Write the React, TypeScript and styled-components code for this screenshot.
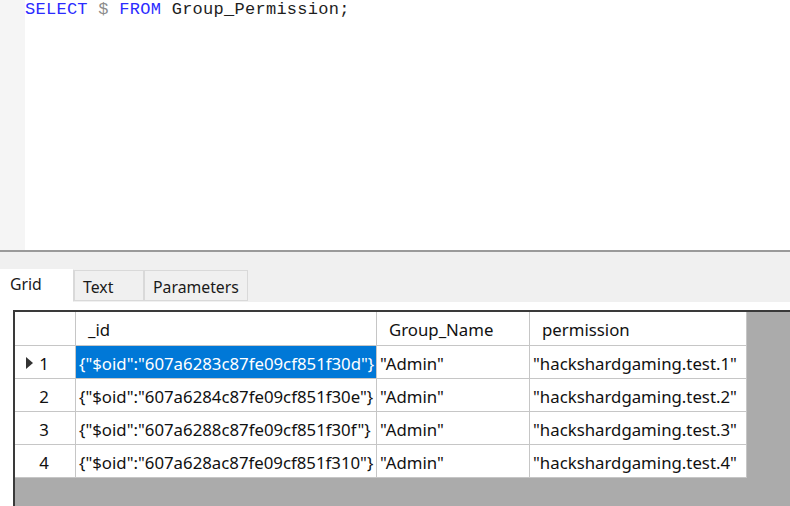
import React from "react";
import styled, { createGlobalStyle } from "styled-components";

const Global = createGlobalStyle`
  html, body { margin: 0; padding: 0; background: #ffffff; }
  body { width: 790px; height: 506px; overflow: hidden; }
  #root { width: 790px; height: 506px; }
`;

const Page = styled.div`
  width: 790px;
  height: 506px;
  display: flex;
  flex-direction: column;
  overflow: hidden;
`;

const Editor = styled.div`
  height: 250px;
  display: flex;
  background: #ffffff;
  flex: none;
`;

const Gutter = styled.div`
  width: 25px;
  background: #f5f5f5;
  flex: none;
`;

const Code = styled.div`
  flex: 1;
  font-family: "Liberation Mono", "DejaVu Sans Mono", monospace;
  font-size: 17px;
  letter-spacing: 0.27px;
  line-height: 20px;
  color: #1e1e1e;
  white-space: pre;
`;

const Kw = styled.span`
  color: #2b2bff;
`;

const Sym = styled.span`
  color: #8c8c8c;
`;

const Splitter = styled.div`
  height: 2px;
  background: #9a9a9a;
  flex: none;
`;

const TabStrip = styled.div`
  height: 50px;
  background: #f0f0f0;
  display: flex;
  align-items: flex-end;
  flex: none;
`;

const Tab = styled.div<{ $active?: boolean; $w: number }>`
  width: ${(p) => p.$w}px;
  box-sizing: border-box;
  height: ${(p) => (p.$active ? 33 : 31)}px;
  margin-bottom: ${(p) => (p.$active ? 0 : 1)}px;
  background: ${(p) => (p.$active ? "#ffffff" : "#f0f0f0")};
  border: 1px solid ${(p) => (p.$active ? "#ffffff" : "#d9d9d9")};
  border-right-color: #d9d9d9;
  border-left-width: ${(p) => (p.$active ? 0 : 1)}px;
  font-family: "Noto Sans", "Open Sans", sans-serif;
  font-size: 15.8px;
  color: #1a1a1a;
  padding-left: ${(p) => (p.$active ? 10 : 8)}px;
  padding-top: ${(p) => (p.$active ? 4 : 6)}px;
  line-height: 20px;
`;

const Panel = styled.div`
  flex: 1;
  background: #ffffff;
  padding: 8px 0 0 13px;
  display: flex;
  min-height: 0;
`;

const GridBox = styled.div`
  flex: 1;
  background: #ababab;
  border-left: 2px solid #3a3a3a;
  border-top: 2px solid #3a3a3a;
  display: flex;
  align-items: flex-start;
`;

const Table = styled.div`
  display: grid;
  grid-template-columns: 60px 300px 152px 216px;
  grid-template-rows: 33px repeat(4, 32px);
  gap: 1px;
  background: #c6c6c6;
  padding: 0 1px 1px 0;
  font-family: "Noto Sans", "Open Sans", sans-serif;
  font-size: 16.8px;
  color: #111111;
`;

const Cell = styled.div<{ $selected?: boolean }>`
  background: ${(p) => (p.$selected ? "#0078d7" : "#ffffff")};
  color: ${(p) => (p.$selected ? "#ffffff" : "#111111")};
  display: flex;
  align-items: center;
  padding: 2px 0 0 3px;
  white-space: nowrap;
  overflow: hidden;
`;

const HeadCell = styled(Cell)`
  padding-left: 12px;
`;

const RowHead = styled.div`
  background: #ffffff;
  display: flex;
  align-items: center;
  position: relative;
  padding: 2px 0 0 19px;
`;

const Num = styled.span`
  width: 20px;
  text-align: center;
`;

const Arrow = styled.svg`
  position: absolute;
  left: 11px;
  top: 11px;
`;

const rows = [
  ['{"$oid":"607a6283c87fe09cf851f30d"}', '"Admin"', '"hackshardgaming.test.1"'],
  ['{"$oid":"607a6284c87fe09cf851f30e"}', '"Admin"', '"hackshardgaming.test.2"'],
  ['{"$oid":"607a6288c87fe09cf851f30f"}', '"Admin"', '"hackshardgaming.test.3"'],
  ['{"$oid":"607a628ac87fe09cf851f310"}', '"Admin"', '"hackshardgaming.test.4"'],
];

export default function App() {
  return (
    <Page>
      <Global />
      <Editor>
        <Gutter />
        <Code>
          <Kw>SELECT</Kw> <Sym>$</Sym> <Kw>FROM</Kw> Group_Permission;
        </Code>
      </Editor>
      <Splitter />
      <TabStrip>
        <Tab $active $w={74}>Grid</Tab>
        <Tab $w={70}>Text</Tab>
        <Tab $w={104}>Parameters</Tab>
      </TabStrip>
      <Panel>
        <GridBox>
          <Table>
            <RowHead />
            <HeadCell>_id</HeadCell>
            <HeadCell>Group_Name</HeadCell>
            <HeadCell>permission</HeadCell>
            {rows.map((r, i) => (
              <React.Fragment key={i}>
                <RowHead>
                  {i === 0 && (
                    <Arrow width="7" height="12" viewBox="0 0 7 12">
                      <path d="M0 0 L7 6 L0 12 Z" fill="#333" />
                    </Arrow>
                  )}
                  <Num>{i + 1}</Num>
                </RowHead>
                <Cell $selected={i === 0}>{r[0]}</Cell>
                <Cell>{r[1]}</Cell>
                <Cell>{r[2]}</Cell>
              </React.Fragment>
            ))}
          </Table>
        </GridBox>
      </Panel>
    </Page>
  );
}
